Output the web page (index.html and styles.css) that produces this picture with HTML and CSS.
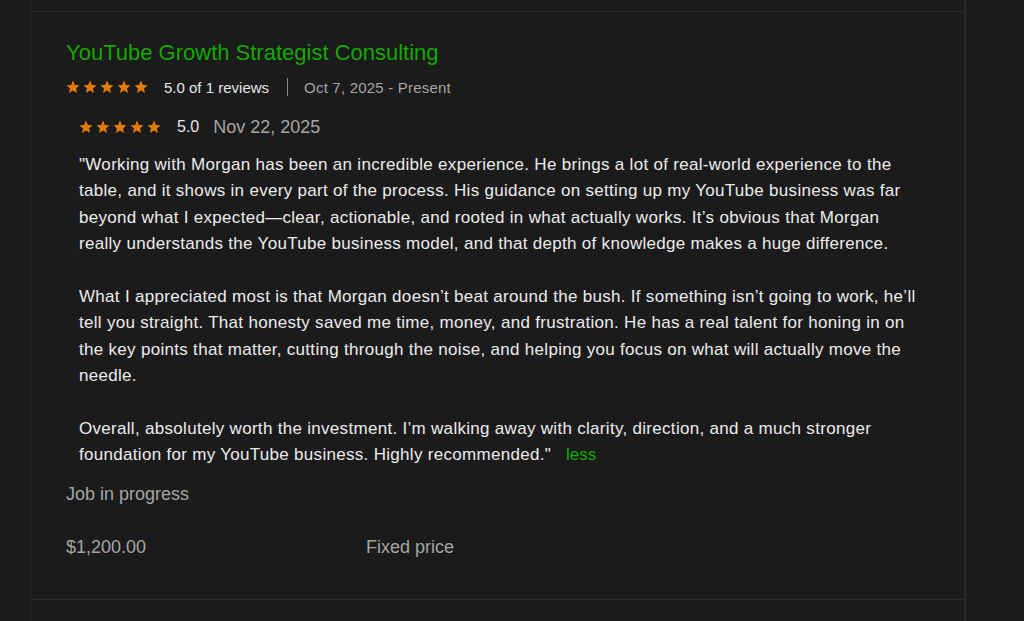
FILE: index.html
```html
<!DOCTYPE html>
<html>
<head>
<meta charset="utf-8">
<link rel="stylesheet" href="styles.css">
</head>
<body>
<div class="column">
  <div class="row-top"></div>
  <section class="job">
    <h2 class="job-title">YouTube Growth Strategist Consulting</h2>
    <div class="meta">
      <span class="stars">
        <svg viewBox="0 0 84 14" width="84" height="14"><g fill="#e37b0c">
          <path id="st" d="M7 0.6l1.9 4.3 4.6 0.4-3.5 3.1 1.1 4.6L7 10.6 2.9 13l1.1-4.6L0.5 5.3l4.6-0.4z"/>
          <use href="#st" x="17"/><use href="#st" x="34"/><use href="#st" x="51"/><use href="#st" x="68"/>
        </g></svg>
      </span>
      <span class="score">5.0 of 1 reviews</span>
      <span class="sep"></span>
      <span class="dates">Oct 7, 2025 - Present</span>
    </div>
    <div class="review">
      <div class="review-meta">
        <span class="stars">
          <svg viewBox="0 0 84 14" width="84" height="14"><g fill="#e37b0c">
            <path id="st2" d="M7 0.6l1.9 4.3 4.6 0.4-3.5 3.1 1.1 4.6L7 10.6 2.9 13l1.1-4.6L0.5 5.3l4.6-0.4z"/>
            <use href="#st2" x="17"/><use href="#st2" x="34"/><use href="#st2" x="51"/><use href="#st2" x="68"/>
          </g></svg>
        </span>
        <span class="rscore">5.0</span>
        <span class="rdate">Nov 22, 2025</span>
      </div>
      <p class="review-text">"Working with Morgan has been an incredible experience. He brings a lot of real-world experience to the table, and it shows in every part of the process. His guidance on setting up my YouTube business was far beyond what I expected—clear, actionable, and rooted in what actually works. It’s obvious that Morgan really understands the YouTube business model, and that depth of knowledge makes a huge difference.<br><br>What I appreciated most is that Morgan doesn’t beat around the bush. If something isn’t going to work, he’ll tell you straight. That honesty saved me time, money, and frustration. He has a real talent for honing in on the key points that matter, cutting through the noise, and helping you focus on what will actually move the needle.<br><br>Overall, absolutely worth the investment. I’m walking away with clarity, direction, and a much stronger foundation for my YouTube business. Highly recommended."<a class="less" href="#">less</a></p>
    </div>
    <div class="status">Job in progress</div>
    <div class="terms">
      <span class="price">$1,200.00</span>
      <span class="kind">Fixed price</span>
    </div>
  </section>
</div>
</body>
</html>
```
FILE: styles.css
```css
html, body {
  margin: 0;
  padding: 0;
  background: #1b1b1b;
  height: 100%;
  overflow: hidden;
}
body {
  font-family: "Liberation Sans", Arial, sans-serif;
  color: #e6e6e6;
}
.column {
  margin-left: 30px;
  width: 933px;
  min-height: 100%;
  border-left: 1px solid #262626;
  border-right: 2px solid #2b2b2b;
}
.row-top {
  height: 11px;
  border-bottom: 1px solid #2d2d2d;
}
.job {
  padding: 27px 35px 0 35px;
  height: 560px;
  border-bottom: 1px solid #2d2d2d;
}
.job-title {
  margin: 0;
  font-size: 22px;
  font-weight: normal;
  color: #14a800;
  line-height: 28px;
}
.meta {
  display: flex;
  align-items: center;
  margin-top: 10px;
  height: 20px;
  font-size: 15px;
}
.stars svg { display: block; }
.score {
  margin-left: 14px;
  color: #e6e6e6;
}
.sep {
  width: 1px;
  height: 18px;
  background: #8a8a8a;
  margin: 0 16px 0 18px;
}
.dates { color: #a5a5a5; letter-spacing: 0.2px; }
.review {
  padding-left: 13px;
  margin-top: 20px;
}
.review-meta {
  display: flex;
  align-items: center;
  height: 20px;
}
.rscore {
  margin-left: 14px;
  font-size: 16px;
  color: #e6e6e6;
}
.rdate {
  margin-left: 14px;
  font-size: 18px;
  color: #a5a5a5;
}
.review-text {
  margin: 15px 0 0 0;
  font-size: 17px;
  letter-spacing: 0.3px;
  line-height: 26.4px;
  color: #ececec;
  width: 846px;
}
.less {
  color: #14a800;
  text-decoration: none;
  margin-left: 15px;
  letter-spacing: 0;
}
.status {
  margin-top: 14px;
  font-size: 18px;
  color: #a5a5a5;
  line-height: 22px;
}
.terms {
  display: flex;
  margin-top: 31px;
  font-size: 18px;
  color: #a5a5a5;
  line-height: 22px;
}
.price { width: 300px; }
```
